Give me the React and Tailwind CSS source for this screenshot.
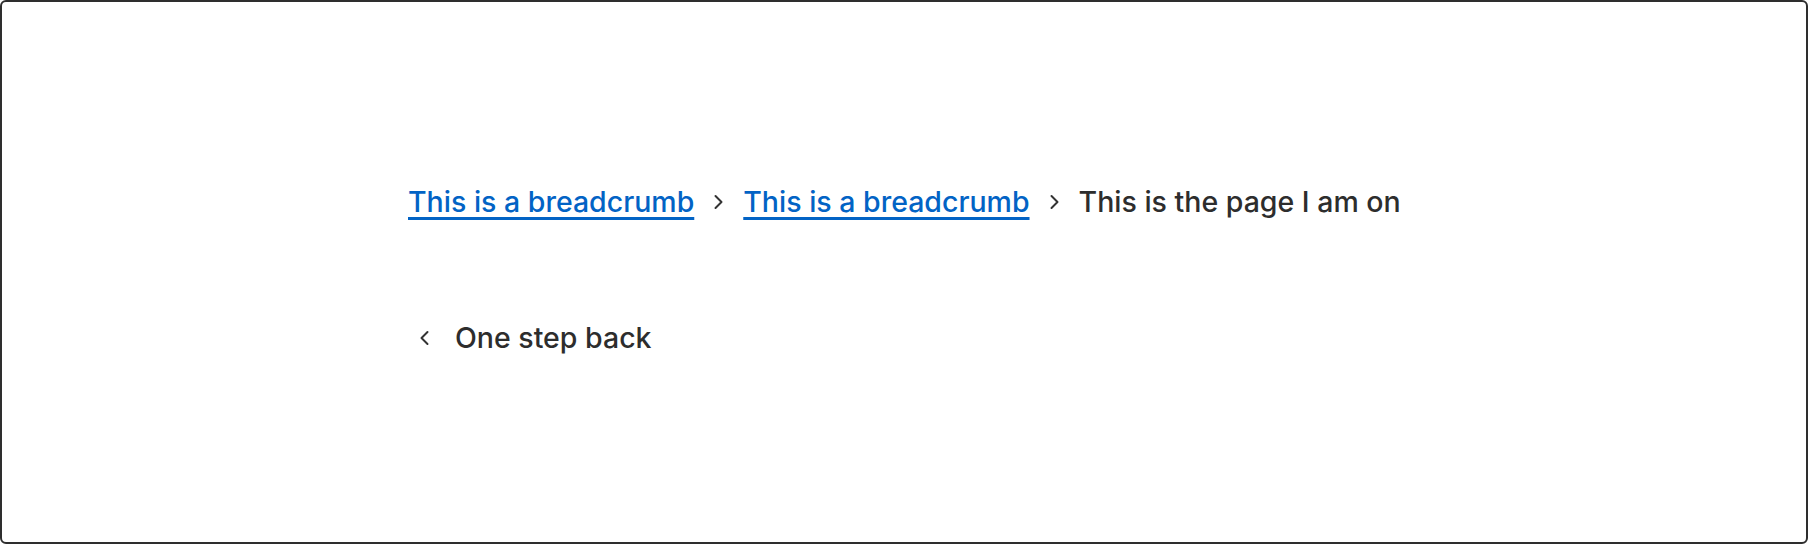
import React from "react";

const Chevron = ({ dir = "right", className = "" }) => (
  <svg
    viewBox="0 0 10 16"
    className={className}
    fill="none"
    stroke="currentColor"
    strokeWidth="2"
    strokeLinecap="round"
    strokeLinejoin="round"
  >
    {dir === "right" ? <path d="M2 2l6 6-6 6" /> : <path d="M8 2L2 8l6 6" />}
  </svg>
);

const App = () => {
  const crumbs = ["This is a breadcrumb", "This is a breadcrumb"];

  return (
    <div className="h-[544px] w-full bg-white">
      <div
        className="h-full w-full rounded-md border-2 border-[#2e2e2e] bg-white text-[#2d2d2d]"
        style={{ fontFamily: "Inter, 'Noto Sans', sans-serif" }}
      >
        <div className="ml-[406px] pt-[181px]">
          {/* Breadcrumb trail */}
          <nav className="flex items-center whitespace-nowrap text-[28.5px] font-medium leading-[38px]">
            {crumbs.map((c, i) => (
              <React.Fragment key={i}>
                <a
                  href="#"
                  className="text-[#0263c5] underline decoration-[3px] underline-offset-[5px]"
                >
                  {c}
                </a>
                <Chevron className="mx-[19px] h-[16px] w-[11px] shrink-0 text-[#333]" />
              </React.Fragment>
            ))}
            <span>This is the page I am on</span>
          </nav>

          {/* Back link */}
          <a href="#" className="mt-[98px] ml-[11px] flex items-center whitespace-nowrap text-[28.5px] font-medium leading-[38px]">
            <Chevron dir="left" className="h-[16px] w-[11px] shrink-0 text-[#333]" />
            <span className="ml-[25px]">One step back</span>
          </a>
        </div>
      </div>
    </div>
  );
};

export default App;
